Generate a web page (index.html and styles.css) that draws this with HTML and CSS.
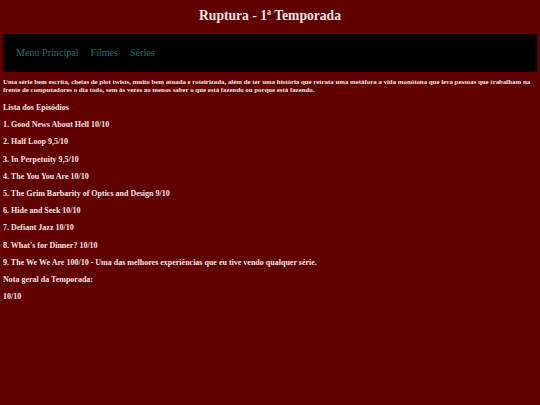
FILE: index.html
```html
<!DOCTYPE html>
<html lang="pt-BR">
<head>
<meta charset="utf-8">
<title>Ruptura - 1ª Temporada</title>
<link rel="stylesheet" href="styles.css">
</head>
<body>
<h1 class="title">Ruptura - 1ª Temporada</h1>
<nav class="menu">
  <a href="#">Menu Principal</a>
  <a href="#">Filmes</a>
  <a href="#">Séries</a>
</nav>
<p class="intro">Uma série bem escrita, cheias de plot twists, muito bem atuada e roteirizada, além de ter uma história que retrata uma metáfora a vida monótona que leva pessoas que trabalham na frente de computadores o dia todo, sem às vezes ao menos saber o que está fazendo ou porque está fazendo.</p>
<p class="item">Lista dos Episódios</p>
<p class="item">1. Good News About Hell 10/10</p>
<p class="item">2. Half Loop 9,5/10</p>
<p class="item">3. In Perpetuity 9,5/10</p>
<p class="item">4. The You You Are 10/10</p>
<p class="item">5. The Grim Barbarity of Optics and Design 9/10</p>
<p class="item">6. Hide and Seek 10/10</p>
<p class="item">7. Defiant Jazz 10/10</p>
<p class="item">8. What's for Dinner? 10/10</p>
<p class="item">9. The We We Are 100/10 - Uma das melhores experiências que eu tive vendo qualquer série.</p>
<p class="item">Nota geral da Temporada:</p>
<p class="item">10/10</p>
</body>
</html>
```
FILE: styles.css
```css
html, body {
  background: #600000;
}
body {
  margin: 0 3px;
  padding-top: 1px;
  font-family: "Liberation Serif", "Times New Roman", serif;
  color: #f3e4e4;
}
.title {
  text-align: center;
  font-size: 13.6px;
  font-weight: bold;
  margin: 7px 0 10px;
  line-height: 16px;
}
.menu {
  display: flex;
  gap: 12px;
  width: 100%;
  padding: 12px 13px;
  background: #000;
  font-size: 10.1px;
  line-height: 14px;
}
.menu a {
  color: #1d6e71;
  text-decoration: none;
}
.intro {
  font-size: 6.85px;
  font-weight: bold;
  line-height: 8px;
  margin: 6px 0 9px;
}
.item {
  font-size: 8px;
  font-weight: bold;
  line-height: 9.2px;
  margin: 8px 0;
}
```
